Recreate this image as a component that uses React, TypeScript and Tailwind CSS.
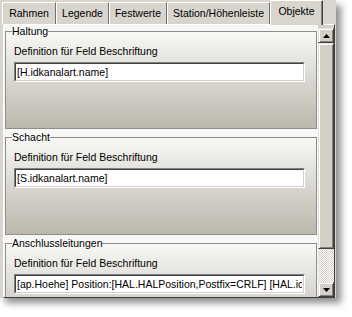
import React from "react";

const tabs = [
  { label: "Rahmen", w: "w-[54px]" },
  { label: "Legende", w: "w-[53px]" },
  { label: "Festwerte", w: "w-[58px]" },
  { label: "Station/Höhenleiste", w: "w-[103px]" },
];

const sections = [
  { legend: "Haltung", value: "[H.idkanalart.name]" },
  { legend: "Schacht", value: "[S.idkanalart.name]" },
  {
    legend: "Anschlussleitungen",
    value: "[ap.Hoehe] Position:[HAL.HALPosition,Postfix=CRLF] [HAL.idkanalart.name]",
  },
];

function Arrow({ down }: { down?: boolean }) {
  return (
    <svg width="7" height="4" viewBox="0 0 7 4">
      <polygon points={down ? "0,0 7,0 3.5,4" : "3.5,0 7,4 0,4"} fill="#000" />
    </svg>
  );
}

function ScrollButton({ down }: { down?: boolean }) {
  return (
    <div className="h-[15px] flex items-center justify-center bg-[#d4d0c8] border border-t-[#e4e2dd] border-l-[#e4e2dd] border-r-[#404040] border-b-[#404040] shadow-[inset_1px_1px_0_#ffffff,inset_-1px_-1px_0_#808080]">
      <Arrow down={down} />
    </div>
  );
}

function Section({ legend, value }: { legend: string; value: string }) {
  return (
    <fieldset className="mx-[1px] mb-[2px] border border-[#8d8d8d] bg-gradient-to-b from-[#f8f8f6] to-[#bbb7ac] pl-[8px] pr-[11px] pt-[8px] pb-[46px]">
      <legend className="ml-[-2px] px-0 text-[10.5px] leading-[12px] text-black">{legend}</legend>
      <p className="text-[10.5px] leading-[13px] text-black">Definition für Feld Beschriftung</p>
      <div className="mt-[4px] border border-t-[#808080] border-l-[#808080] border-r-white border-b-white">
        <input
          readOnly
          defaultValue={value}
          className="block w-full h-[18px] bg-white border border-t-[#404040] border-l-[#404040] border-r-[#d4d0c8] border-b-[#d4d0c8] px-[1px] text-[10.5px] text-black outline-none"
        />
      </div>
    </fieldset>
  );
}

export default function App() {
  return (
    <div className="w-[352px] h-[317px] bg-white overflow-hidden font-['Liberation_Sans',Arial,sans-serif]">
      <div className="w-[336px] h-[298px] bg-[#d8d5cf] flex flex-col shadow-[5px_5px_7px_rgba(0,0,0,0.45)]">
        {/* Tabs */}
        <div className="h-[24px] flex items-end pl-[2px] shrink-0">
          {tabs.map((t) => (
            <div
              key={t.label}
              className={`${t.w} h-[22px] pt-[4px] text-center text-[10.5px] leading-[13px] text-black border-t border-l border-r border-t-white border-l-white border-r-[#6e6e6e]`}
            >
              {t.label}
            </div>
          ))}
          <div className="relative z-10 self-start w-[53px] h-[25px] pt-[4px] text-center text-[10.5px] leading-[13px] text-black bg-[#d8d5cf] border-t border-l border-r border-t-white border-l-white border-r-[#404040] shadow-[inset_-1px_0_0_#808080]">
            Objekte
          </div>
        </div>

        {/* Panel */}
        <div className="ml-[3px] mr-[1px] flex-1 flex border-t border-l border-r border-b border-t-white border-l-white border-r-[#404040] border-b-[#404040] min-h-0">
          <div className="w-[314px] bg-[#f7f7f5] overflow-hidden">
            {sections.map((s) => (
              <Section key={s.legend} legend={s.legend} value={s.value} />
            ))}
          </div>
          <div className="w-[16px] flex flex-col pt-[3px] bg-[#d4d0c8]">
            <ScrollButton />
            <div className="h-[206px] bg-[#d4d0c8] border border-t-[#e4e2dd] border-l-[#e4e2dd] border-r-[#404040] border-b-[#404040] shadow-[inset_1px_1px_0_#ffffff,inset_-1px_-1px_0_#808080]" />
            <div className="flex-1 bg-[repeating-conic-gradient(#d4d0c8_0_25%,#ffffff_0_50%)] bg-[length:2px_2px]" />
            <ScrollButton down />
          </div>
        </div>
      </div>
    </div>
  );
}
